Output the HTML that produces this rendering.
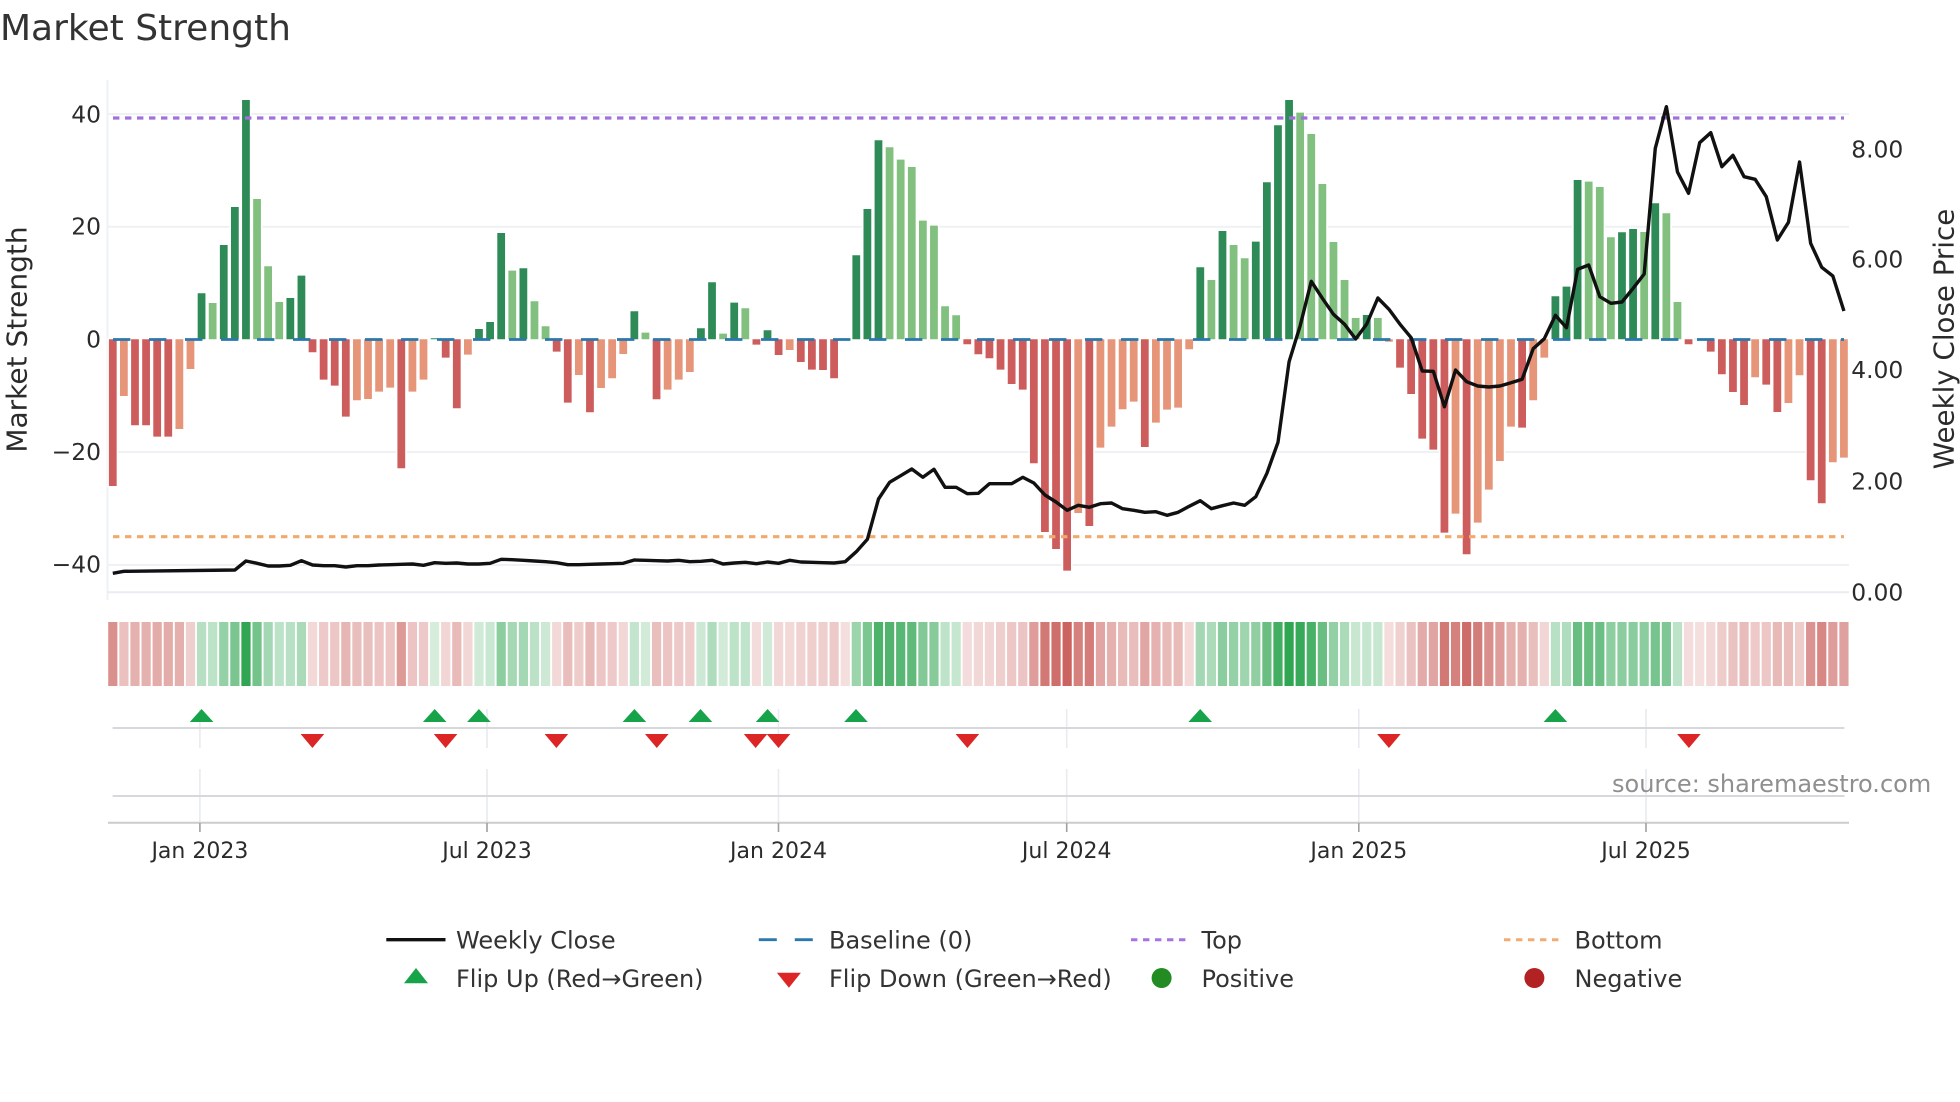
<!DOCTYPE html>
<html><head><meta charset="utf-8"><title>Market Strength</title>
<style>
html,body{margin:0;padding:0;background:#fff}
svg{display:block}
text{font-family:"DejaVu Sans","Liberation Sans",sans-serif}
.s rect{width:.83px;height:64px}
.b{stroke:#fff;stroke-width:3;paint-order:stroke;vector-effect:non-scaling-stroke}
.t{font-size:23.4px;fill:#2b2b2b}
.x{font-size:22px;fill:#2b2b2b;text-anchor:middle}
.l{font-size:24px;fill:#333}
</style></head><body>
<svg width="1960" height="1102" viewBox="0 0 1960 1102" xmlns="http://www.w3.org/2000/svg">
<rect width="1960" height="1102" fill="#fff"/>
<text x="0" y="40" font-size="36" fill="#333">Market Strength</text>
<!-- grid -->
<g stroke="#eff1f4" stroke-width="2" fill="none">
<path d="M107.5 80V600"/>
<path d="M107 114H1849M107 226.7H1849M107 339.3H1849M107 452H1849M107 565H1849"/>
<path d="M107 592.3H1849" stroke="#e9ecf2"/>
</g>
<!-- bars -->
<g transform="translate(108.9 339.3) scale(11.097 1)">
<path class="b" fill="#2e8b57" d="M8 0v-46h.7v46zM10 0v-94.3h.7v94.3zM11 0v-132.3h.7v132.3zM12 0v-239.3h.7v239.3zM16 0v-41.3h.7v41.3zM17 0v-63.7h.7v63.7zM29 0v-1h.7v1zM33 0v-10.3h.7v10.3zM34 0v-17.3h.7v17.3zM35 0v-106.3h.7v106.3zM37 0v-71h.7v71zM47 0v-28h.7v28zM53 0v-11h.7v11zM54 0v-57h.7v57zM56 0v-36.7h.7v36.7zM59 0v-9h.7v9zM67 0v-84h.7v84zM68 0v-130.3h.7v130.3zM69 0v-199h.7v199zM98 0v-72h.7v72zM100 0v-108.3h.7v108.3zM103 0v-97.7h.7v97.7zM104 0v-157h.7v157zM105 0v-214h.7v214zM106 0v-239.3h.7v239.3zM113 0v-24.3h.7v24.3zM130 0v-43h.7v43zM131 0v-52.7h.7v52.7zM132 0v-159.3h.7v159.3zM136 0v-107h.7v107zM137 0v-110.3h.7v110.3zM139 0v-136h.7v136z"/>
<path class="b" fill="#81c07f" d="M9 0v-36.3h.7v36.3zM13 0v-140.3h.7v140.3zM14 0v-73h.7v73zM15 0v-37.3h.7v37.3zM36 0v-68.7h.7v68.7zM38 0v-38h.7v38zM39 0v-13h.7v13zM48 0v-6.7h.7v6.7zM55 0v-5.7h.7v5.7zM57 0v-31h.7v31zM70 0v-192h.7v192zM71 0v-179.7h.7v179.7zM72 0v-172.3h.7v172.3zM73 0v-118.7h.7v118.7zM74 0v-113.7h.7v113.7zM75 0v-33h.7v33zM76 0v-24h.7v24zM99 0v-59.3h.7v59.3zM101 0v-94.3h.7v94.3zM102 0v-81h.7v81zM107 0v-226.7h.7v226.7zM108 0v-205.3h.7v205.3zM109 0v-155.3h.7v155.3zM110 0v-97.3h.7v97.3zM111 0v-59.3h.7v59.3zM112 0v-21.3h.7v21.3zM114 0v-21.3h.7v21.3zM133 0v-157.7h.7v157.7zM134 0v-152.3h.7v152.3zM135 0v-102h.7v102zM138 0v-107.3h.7v107.3zM140 0v-126h.7v126zM141 0v-37.3h.7v37.3z"/>
<path class="b" fill="#cd5c5c" d="M0 0h.7v146.7h-.7zM2 0h.7v86h-.7zM3 0h.7v86h-.7zM4 0h.7v97.3h-.7zM5 0h.7v97.3h-.7zM18 0h.7v13h-.7zM19 0h.7v40.3h-.7zM20 0h.7v46.3h-.7zM21 0h.7v77.3h-.7zM26 0h.7v129h-.7zM30 0h.7v18.3h-.7zM31 0h.7v69h-.7zM40 0h.7v12.3h-.7zM41 0h.7v63.3h-.7zM43 0h.7v73h-.7zM49 0h.7v60h-.7zM58 0h.7v5.3h-.7zM60 0h.7v15.7h-.7zM62 0h.7v22.7h-.7zM63 0h.7v30.3h-.7zM64 0h.7v30.7h-.7zM65 0h.7v39h-.7zM77 0h.7v5h-.7zM78 0h.7v15h-.7zM79 0h.7v19h-.7zM80 0h.7v30.3h-.7zM81 0h.7v44.7h-.7zM82 0h.7v50.3h-.7zM83 0h.7v124h-.7zM84 0h.7v192.7h-.7zM85 0h.7v209.7h-.7zM86 0h.7v231.3h-.7zM88 0h.7v186.7h-.7zM93 0h.7v107.7h-.7zM116 0h.7v28.3h-.7zM117 0h.7v54.7h-.7zM118 0h.7v99.3h-.7zM119 0h.7v110.3h-.7zM120 0h.7v193.3h-.7zM122 0h.7v215h-.7zM127 0h.7v88.3h-.7zM142 0h.7v5h-.7zM144 0h.7v12.3h-.7zM145 0h.7v35h-.7zM146 0h.7v52.7h-.7zM147 0h.7v65.7h-.7zM149 0h.7v45.3h-.7zM150 0h.7v72.7h-.7zM153 0h.7v141h-.7zM154 0h.7v164h-.7z"/>
<path class="b" fill="#e69579" d="M1 0h.7v56.7h-.7zM6 0h.7v89.7h-.7zM7 0h.7v29.7h-.7zM22 0h.7v61h-.7zM23 0h.7v59.7h-.7zM24 0h.7v52.3h-.7zM25 0h.7v48.3h-.7zM27 0h.7v52.3h-.7zM28 0h.7v40.3h-.7zM32 0h.7v15.3h-.7zM42 0h.7v35.7h-.7zM44 0h.7v48.7h-.7zM45 0h.7v39h-.7zM46 0h.7v14.7h-.7zM50 0h.7v50.3h-.7zM51 0h.7v40.3h-.7zM52 0h.7v32.7h-.7zM61 0h.7v10.7h-.7zM87 0h.7v173.7h-.7zM89 0h.7v108.3h-.7zM90 0h.7v87.3h-.7zM91 0h.7v70h-.7zM92 0h.7v62.3h-.7zM94 0h.7v83.3h-.7zM95 0h.7v70.3h-.7zM96 0h.7v68.3h-.7zM97 0h.7v10h-.7zM115 0h.7v2.5h-.7zM121 0h.7v174.3h-.7zM123 0h.7v183.3h-.7zM124 0h.7v150.3h-.7zM125 0h.7v121.7h-.7zM126 0h.7v87.3h-.7zM128 0h.7v61h-.7zM129 0h.7v18.3h-.7zM148 0h.7v38h-.7zM151 0h.7v63.7h-.7zM152 0h.7v36h-.7zM155 0h.7v123h-.7zM156 0h.7v118.3h-.7z"/>
</g>
<!-- reference lines -->
<path d="M113 339.5H1844" stroke="#2a78ad" stroke-width="2.8" stroke-dasharray="17.4 18.6" fill="none"/>
<path d="M113 118H1844" stroke="#a070dc" stroke-width="3.2" stroke-dasharray="6.4 5.6" fill="none"/>
<path d="M113 536.7H1844" stroke="#f2a96c" stroke-width="3.2" stroke-dasharray="6.4 5.6" fill="none"/>
<!-- price -->
<g transform="translate(112.8 0) scale(11.097 1)">
<polyline fill="none" stroke="#111" stroke-width="3.4" stroke-linejoin="round" vector-effect="non-scaling-stroke" points="0 573.3 1 571.3 11 570 12 561 13 563.3 14 566 15 566 16 565.3 17 560.7 18 565 19 565.7 20 565.7 21 567 22 565.7 23 565.7 24 565 25 564.7 26 564.3 27 564 28 565.3 29 562.7 30 563.3 31 563 32 564 33 564 34 563.3 35 559.3 36 559.7 37 560.3 38 561 39 561.7 40 562.7 41 564.7 42 564.7 43 564.3 44 564 45 563.7 46 563.3 47 560 48 560.3 49 560.7 50 561 51 560.3 52 561.7 53 561.3 54 560.3 55 564 56 563 57 562.3 58 563.7 59 562 60 563.3 61 560.3 62 562 63 562.3 64 562.7 65 563 66 561.7 67 551.7 68 539.3 69 499 70 482.3 71 475.7 72 469 73 477.3 74 469.3 75 487.3 76 487.3 77 493.7 78 493.3 79 483.7 80 483.7 81 483.7 82 477.3 83 483 84 495 85 502 86 510.3 87 505.3 88 507.3 89 503.7 90 503 91 508.7 92 510.3 93 512.3 94 511.7 95 515.3 96 512.3 97 506.3 98 500.7 99 508.7 100 505.7 101 503 102 505.3 103 496.7 104 473.3 105 442.3 106 361.7 107 325.7 108 281.3 109 298.3 110 314.3 111 324.3 112 339 113 324 114 298 115 309.3 116 324.3 117 337.7 118 371 119 371.3 120 406.7 121 370 122 381.7 123 386 124 387 125 386 126 382.7 127 379.3 128 348.7 129 338.7 130 315.3 131 327.7 132 269.3 133 265 134 296.7 135 303.3 136 302 137 288.3 138 274 139 148.3 140 106.7 141 172 142 193.3 143 142.7 144 132.7 145 166.7 146 155.3 147 176.7 148 179.3 149 196.7 150 240 151 222.3 152 162 153 243.3 154 267.3 155 276 156 311"/>
</g>
<!-- y ticks left -->
<g class="t" text-anchor="end">
<text class="t" x="101" y="122.7">40</text>
<text class="t" x="101" y="234.7">20</text>
<text class="t" x="101" y="347.5">0</text>
<text class="t" x="101" y="460">−20</text>
<text class="t" x="101" y="572.3">−40</text>
</g>
<!-- y ticks right -->
<text class="t" x="1851.2" y="157.3">8.00</text>
<text class="t" x="1851.2" y="267.7">6.00</text>
<text class="t" x="1851.2" y="378.2">4.00</text>
<text class="t" x="1851.2" y="489.5">2.00</text>
<text class="t" x="1851.2" y="600.3">0.00</text>
<!-- axis labels -->
<text transform="translate(26.5 339.5) rotate(-90)" font-size="28" fill="#2b2b2b" text-anchor="middle">Market Strength</text>
<text transform="translate(1953.3 339) rotate(-90)" font-size="27.7" fill="#2b2b2b" text-anchor="middle">Weekly Close Price</text>
<!-- heat strip -->
<g class="s" transform="translate(108.2 622) scale(11.097 1)">
<g fill="#c95f5b"><rect x="0" opacity=".69"/><rect x="1" opacity=".39"/><rect x="2" opacity=".49"/><rect x="3" opacity=".49"/><rect x="4" opacity=".52"/><rect x="5" opacity=".52"/><rect x="6" opacity=".5"/><rect x="7" opacity=".3"/><rect x="18" opacity=".24"/><rect x="19" opacity=".33"/><rect x="20" opacity=".35"/><rect x="21" opacity=".46"/><rect x="22" opacity=".4"/><rect x="23" opacity=".4"/><rect x="24" opacity=".37"/><rect x="25" opacity=".36"/><rect x="26" opacity=".63"/><rect x="27" opacity=".37"/><rect x="28" opacity=".33"/><rect x="30" opacity=".26"/><rect x="31" opacity=".43"/><rect x="32" opacity=".25"/><rect x="40" opacity=".24"/><rect x="41" opacity=".41"/><rect x="42" opacity=".32"/><rect x="43" opacity=".44"/><rect x="44" opacity=".36"/><rect x="45" opacity=".33"/><rect x="46" opacity=".25"/><rect x="49" opacity=".4"/><rect x="50" opacity=".37"/><rect x="51" opacity=".33"/><rect x="52" opacity=".31"/><rect x="58" opacity=".22"/><rect x="60" opacity=".25"/><rect x="61" opacity=".24"/><rect x="62" opacity=".28"/><rect x="63" opacity=".3"/><rect x="64" opacity=".3"/><rect x="65" opacity=".33"/><rect x="66" opacity=".2"/><rect x="77" opacity=".22"/><rect x="78" opacity=".25"/><rect x="79" opacity=".26"/><rect x="80" opacity=".3"/><rect x="81" opacity=".35"/><rect x="82" opacity=".37"/><rect x="83" opacity=".61"/><rect x="84" opacity=".84"/><rect x="85" opacity=".9"/><rect x="86" opacity=".97"/><rect x="87" opacity=".78"/><rect x="88" opacity=".82"/><rect x="89" opacity=".56"/><rect x="90" opacity=".49"/><rect x="91" opacity=".43"/><rect x="92" opacity=".41"/><rect x="93" opacity=".56"/><rect x="94" opacity=".48"/><rect x="95" opacity=".43"/><rect x="96" opacity=".43"/><rect x="97" opacity=".23"/><rect x="115" opacity=".21"/><rect x="116" opacity=".29"/><rect x="117" opacity=".38"/><rect x="118" opacity=".53"/><rect x="119" opacity=".57"/><rect x="120" opacity=".84"/><rect x="121" opacity=".78"/><rect x="122" opacity=".92"/><rect x="123" opacity=".81"/><rect x="124" opacity=".7"/><rect x="125" opacity=".61"/><rect x="126" opacity=".49"/><rect x="127" opacity=".49"/><rect x="128" opacity=".4"/><rect x="129" opacity=".26"/><rect x="142" opacity=".22"/><rect x="143" opacity=".2"/><rect x="144" opacity=".24"/><rect x="145" opacity=".32"/><rect x="146" opacity=".38"/><rect x="147" opacity=".42"/><rect x="148" opacity=".33"/><rect x="149" opacity=".35"/><rect x="150" opacity=".44"/><rect x="151" opacity=".41"/><rect x="152" opacity=".32"/><rect x="153" opacity=".67"/><rect x="154" opacity=".75"/><rect x="155" opacity=".61"/><rect x="156" opacity=".59"/></g>
<g fill="#30a552"><rect x="8" opacity=".35"/><rect x="9" opacity=".32"/><rect x="10" opacity=".51"/><rect x="11" opacity=".64"/><rect x="12" opacity="1"/><rect x="13" opacity=".67"/><rect x="14" opacity=".44"/><rect x="15" opacity=".32"/><rect x="16" opacity=".34"/><rect x="17" opacity=".41"/><rect x="29" opacity=".2"/><rect x="33" opacity=".23"/><rect x="34" opacity=".26"/><rect x="35" opacity=".55"/><rect x="36" opacity=".43"/><rect x="37" opacity=".44"/><rect x="38" opacity=".33"/><rect x="39" opacity=".24"/><rect x="47" opacity=".29"/><rect x="48" opacity=".22"/><rect x="53" opacity=".24"/><rect x="54" opacity=".39"/><rect x="55" opacity=".22"/><rect x="56" opacity=".32"/><rect x="57" opacity=".3"/><rect x="59" opacity=".23"/><rect x="67" opacity=".48"/><rect x="68" opacity=".63"/><rect x="69" opacity=".86"/><rect x="70" opacity=".84"/><rect x="71" opacity=".8"/><rect x="72" opacity=".77"/><rect x="73" opacity=".6"/><rect x="74" opacity=".58"/><rect x="75" opacity=".31"/><rect x="76" opacity=".28"/><rect x="98" opacity=".44"/><rect x="99" opacity=".4"/><rect x="100" opacity=".56"/><rect x="101" opacity=".51"/><rect x="102" opacity=".47"/><rect x="103" opacity=".53"/><rect x="104" opacity=".72"/><rect x="105" opacity=".91"/><rect x="106" opacity="1"/><rect x="107" opacity=".96"/><rect x="108" opacity=".88"/><rect x="109" opacity=".72"/><rect x="110" opacity=".52"/><rect x="111" opacity=".4"/><rect x="112" opacity=".27"/><rect x="113" opacity=".28"/><rect x="114" opacity=".27"/><rect x="130" opacity=".34"/><rect x="131" opacity=".38"/><rect x="132" opacity=".73"/><rect x="133" opacity=".73"/><rect x="134" opacity=".71"/><rect x="135" opacity=".54"/><rect x="136" opacity=".56"/><rect x="137" opacity=".57"/><rect x="138" opacity=".56"/><rect x="139" opacity=".65"/><rect x="140" opacity=".62"/><rect x="141" opacity=".32"/></g>
</g>
<!-- lower panels: vertical grid -->
<g stroke="#e8ebef" stroke-width="1.6" fill="none">
<path d="M199.9 709V748M199.9 769V822M487 709V748M487 769V822M778.5 709V748M778.5 769V822M1066.7 709V748M1066.7 769V822M1358.8 709V748M1358.8 769V822M1646 709V748M1646 769V822"/>
</g>
<path d="M112.6 728H1844.4M112.6 796H1844.4" stroke="#d6d8dc" stroke-width="2" fill="none"/>
<path d="M108 822.7H1849" stroke="#ccc" stroke-width="2" fill="none"/>
<path d="M199.9 823V832M487 823V832M778.5 823V832M1066.7 823V832M1358.8 823V832M1646 823V832" stroke="#a0a0a0" stroke-width="1.6" fill="none"/>
<!-- flip markers -->
<g fill="#16a34a">
<path d="M201.6 709l11.8 13h-23.6zM434.7 709l11.8 13h-23.6zM478.9 709l11.8 13h-23.6zM634.4 709l11.8 13h-23.6zM700.5 709l11.8 13h-23.6zM767.6 709l11.8 13h-23.6zM856 709l11.8 13h-23.6zM1200.2 709l11.8 13h-23.6zM1555.4 709l11.8 13h-23.6z"/>
</g>
<g fill="#dc2626">
<path d="M312.4 748l-11.8-14h23.6zM445.6 748l-11.8-14h23.6zM556.4 748l-11.8-14h23.6zM656.8 748l-11.8-14h23.6zM755.6 748l-11.8-14h23.6zM778.5 748l-11.8-14h23.6zM967.4 748l-11.8-14h23.6zM1388.9 748l-11.8-14h23.6zM1688.9 748l-11.8-14h23.6z"/>
</g>
<!-- source -->
<text x="1612" y="792" font-size="24" fill="#8f8f8f">source: sharemaestro.com</text>
<!-- x labels -->
<text class="x" x="199.9" y="858">Jan 2023</text>
<text class="x" x="487" y="858">Jul 2023</text>
<text class="x" x="778.5" y="858">Jan 2024</text>
<text class="x" x="1066.7" y="858">Jul 2024</text>
<text class="x" x="1358.8" y="858">Jan 2025</text>
<text class="x" x="1646" y="858">Jul 2025</text>
<!-- legend -->
<path d="M386.3 939.7H445.5" stroke="#111" stroke-width="3.4"/>
<path d="M758.8 939.7H813" stroke="#2a78ad" stroke-width="2.8" stroke-dasharray="18 18"/>
<path d="M1131 939.7H1186" stroke="#a673e3" stroke-width="3" stroke-dasharray="6.4 5.6"/>
<path d="M1504 939.7H1559" stroke="#f2ab72" stroke-width="3" stroke-dasharray="6.4 5.6"/>
<path d="M416 968l12 15.3h-24z" fill="#16a34a"/>
<path d="M788.9 987.7l-12-15h24z" fill="#dc2626"/>
<circle cx="1161.6" cy="978" r="10" fill="#228b22"/>
<circle cx="1534.4" cy="978" r="10" fill="#b22222"/>
<text class="l" x="456" y="948.5">Weekly Close</text>
<text class="l" x="829" y="948.5">Baseline (0)</text>
<text class="l" x="1201.5" y="948.5">Top</text>
<text class="l" x="1574.5" y="948.5">Bottom</text>
<text class="l" x="456" y="987">Flip Up (Red→Green)</text>
<text class="l" x="829" y="987">Flip Down (Green→Red)</text>
<text class="l" x="1201.5" y="987">Positive</text>
<text class="l" x="1574.5" y="987">Negative</text>
</svg>
</body></html>
